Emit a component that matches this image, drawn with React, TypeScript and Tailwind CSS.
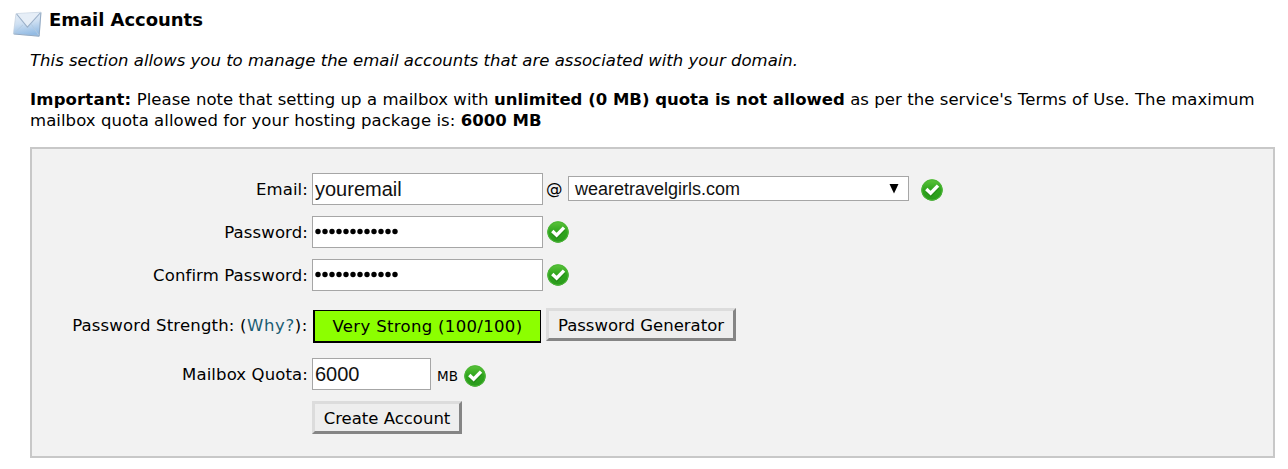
import React from 'react';

const CheckIcon: React.FC<{ className?: string }> = ({ className = '' }) => (
  <svg className={`h-[22px] w-[22px] shrink-0 ${className}`} viewBox="0 0 22 22" fill="none">
    <defs>
      <linearGradient id="check-fill" x1="0" y1="0" x2="0" y2="1">
        <stop offset="0" stopColor="#5cc43a" />
        <stop offset="0.5" stopColor="#2ea41d" />
        <stop offset="1" stopColor="#2a9a1c" />
      </linearGradient>
    </defs>
    <circle cx="11" cy="11" r="10.7" fill="url(#check-fill)" />
    <circle cx="11" cy="11" r="10.1" stroke="#4bb536" strokeWidth="1" />
    <path d="M5.8 12.4l4 3.7 7.6-8" stroke="#1d7a13" strokeOpacity="0.5" strokeWidth="3" />
    <path d="M5.3 10.1l4.3 4.1 7.4-7.6" stroke="#fff" strokeWidth="3.4" />
  </svg>
);

const EnvelopeIcon: React.FC = () => (
  <svg className="h-[28px] w-[30px] shrink-0" viewBox="0 0 30 28" fill="none">
    <defs>
      <linearGradient id="envelope-fill" x1="0" y1="0" x2="0.2" y2="1">
        <stop offset="0" stopColor="#e9f0f8" />
        <stop offset="0.5" stopColor="#cfe0f2" />
        <stop offset="1" stopColor="#94bce4" />
      </linearGradient>
    </defs>
    <path d="M4 4.6L29 3.2l-1.8 24L1.4 24.8z" fill="url(#envelope-fill)" stroke="#c3d0de" strokeWidth="0.7" />
    <path d="M28.9 3.6l-1.8 23.6L1.8 25" stroke="#8ca5c0" strokeWidth="0.9" />
    <path d="M2.2 24.2l8.8-8.4M26.6 26l-7.2-10.6" stroke="#b3c9df" strokeWidth="0.9" />
    <path d="M4.6 5l10.8 13.2L28.2 4" fill="#e6eef7" stroke="#9bb0c8" strokeWidth="1.1" />
  </svg>
);

interface RowProps {
  label?: React.ReactNode;
  className?: string;
  children: React.ReactNode;
}

const Row: React.FC<RowProps> = ({ label, className = '', children }) => (
  <div className={`flex ${className}`}>
    <div className="w-[276px] shrink-0 pt-[6px] text-right leading-[22px] tracking-[0.12px]">{label}</div>
    <div className="ml-1 flex items-start">{children}</div>
  </div>
);

const inputClass =
  'block h-8 border border-[#a6a6a6] bg-white px-[2px] font-["Liberation_Sans",Arial,sans-serif] text-[20px] text-[#111] outline-none';

const buttonClass =
  'h-[33px] border-[3px] border-t-[#dcdcdc] border-l-[#dcdcdc] border-r-[#858585] border-b-[#858585] bg-[#eee] pt-[3px] leading-[24px] whitespace-nowrap';

const PasswordDots: React.FC = () => (
  <div className={`${inputClass} flex w-[231px] items-center`}>
    <svg className="h-2 w-[84px]" viewBox="0 0 84 8">
      {Array.from({ length: 12 }, (_, i) => (
        <circle key={i} cx={3 + i * 7} cy="3.5" r="2.7" fill="#000" />
      ))}
    </svg>
  </div>
);

const App: React.FC = () => {
  return (
    <main className='h-[469px] w-[1288px] overflow-hidden bg-white font-["DejaVu_Sans",Verdana,sans-serif] text-[16.5px] text-black'>
      <header className="flex pt-[9px] pl-3">
        <EnvelopeIcon />
        <h1 className="ml-[7px] text-[18px] leading-[22px] font-bold tracking-[-0.04px]">Email Accounts</h1>
      </header>

      <div className="ml-[30px] whitespace-nowrap">
        <p className="mt-[13px] leading-[22px] tracking-[0.01px] italic">
          This section allows you to manage the email accounts that are associated with your domain.
        </p>
        <p className="mt-[17px] leading-[21px] tracking-[0.06px]">
          <b className="tracking-[0.15px]">Important:</b> Please note that setting up a mailbox with{' '}
          <b className="tracking-normal">unlimited (0 MB) quota is not allowed</b> as per the service's Terms of Use. The
          maximum
          <br />
          mailbox quota allowed for your hosting package is: <b>6000 MB</b>
        </p>
      </div>

      <section className="mt-[16px] ml-[30px] h-[311px] w-[1245px] border-2 border-[#c8c8c8] bg-[#f2f2f2] pt-6">
        <Row label="Email:">
          <input className={`${inputClass} w-[231px]`} defaultValue="youremail" />
          <span className="ml-[3px] w-[22px] pt-[5px] leading-[22px]">@</span>
          <div className='mt-[3px] flex h-[25px] w-[341px] items-center justify-between border border-[#a6a6a6] bg-white pr-[9px] pl-[6px] font-["Liberation_Sans",Arial,sans-serif] text-[18px] text-[#111]'>
            <span className="relative top-[1px]">wearetravelgirls.com</span>
            <svg className="h-[10px] w-[10px]" viewBox="0 0 10 10">
              <path d="M0.5 0h9L5 9.5z" fill="#000" />
            </svg>
          </div>
          <CheckIcon className="mt-[6px] ml-3" />
        </Row>
        <Row label="Password:" className="mt-[11px]">
          <PasswordDots />
          <CheckIcon className="mt-[5px] ml-1" />
        </Row>
        <Row label="Confirm Password:" className="mt-[11px]">
          <PasswordDots />
          <CheckIcon className="mt-[5px] ml-1" />
        </Row>
        <Row
          className="mt-[17px]"
          label={
            <span className="relative top-[1px] tracking-[0.18px]">
              Password Strength: <span className="tracking-[0.6px]">(<a className="text-[#1b5c72]">Why?</a>):</span>
            </span>
          }
        >
          <div className="mt-[2px] ml-[1px] h-[33px] w-[228px] border border-b-2 border-l-2 border-black bg-[#8cff00] text-center leading-[32px] tracking-[0.33px] whitespace-nowrap">
            Very Strong (100/100)
          </div>
          <button className={`${buttonClass} ml-[5px] w-[190px]`}>Password Generator</button>
        </Row>
        <Row label="Mailbox Quota:" className="mt-[15px]">
          <input className={`${inputClass} w-[119px]`} defaultValue="6000" />
          <span className="ml-[6px] w-[27px] pt-[7px] text-[13.5px] leading-[22px]">MB</span>
          <CheckIcon className="mt-[7px]" />
        </Row>
        <Row className="mt-[11px]">
          <button className={`${buttonClass} w-[150px]`}>Create Account</button>
        </Row>
      </section>
    </main>
  );
};

export default App;
